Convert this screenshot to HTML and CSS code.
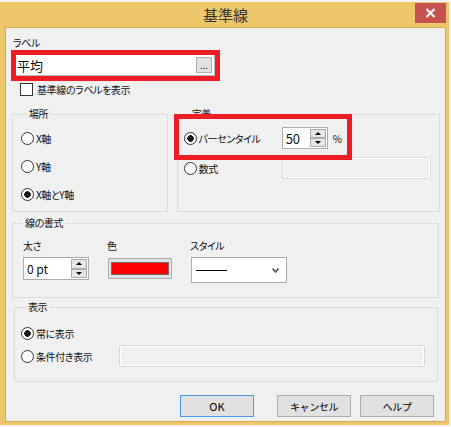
FILE: index.html
```html
<!DOCTYPE html>
<html lang="ja">

<head>
    <meta charset="utf-8">
    <meta name="viewport" content="width=device-width, initial-scale=1.0">
    <title>基準線</title>
    <link rel="stylesheet" href="styles.css">
</head>

<body>
    <div class="window">
        <div class="titlebar">
            <h1 class="title">基準線</h1>
            <button class="close" aria-label="閉じる">
                <svg width="11" height="10" viewBox="0 0 11 10">
                    <path d="M1.5 1 L9.5 9 M9.5 1 L1.5 9" stroke="#fff" stroke-width="2" fill="none" />
                </svg>
            </button>
        </div>

        <div class="client">
            <p class="caption">ラベル</p>
            <div class="mark">
                <div class="textbox">
                    <span>平均</span>
                    <button class="dots">...</button>
                </div>
            </div>
            <label class="check"><span class="box"></span>基準線のラベルを表示</label>

            <div class="groups">
                <fieldset class="group place">
                    <legend>場所</legend>
                    <label class="opt"><span class="radio"></span>X軸</label>
                    <label class="opt"><span class="radio"></span>Y軸</label>
                    <label class="opt"><span class="radio on"></span>X軸とY軸</label>
                </fieldset>

                <fieldset class="group define">
                    <legend>定義</legend>
                    <div class="row">
                        <label class="opt wide"><span class="radio on"></span>パーセンタイル</label>
                        <div class="spin num">
                            <span class="val">50</span>
                            <span class="btns">
                                <span class="arrow"><span class="up"></span></span>
                                <span class="arrow"><span class="down"></span></span>
                            </span>
                        </div>
                        <span class="unit">%</span>
                    </div>
                    <div class="row">
                        <label class="opt wide"><span class="radio"></span>数式</label>
                        <div class="disabled formula"></div>
                    </div>
                </fieldset>
            </div>

            <fieldset class="group format">
                <legend>線の書式</legend>
                <div class="fields">
                    <div class="col weight">
                        <span class="field_label">太さ</span>
                        <div class="spin pt">
                            <span class="val">0 pt</span>
                            <span class="btns">
                                <span class="arrow"><span class="up"></span></span>
                                <span class="arrow"><span class="down"></span></span>
                            </span>
                        </div>
                    </div>
                    <div class="col colour">
                        <span class="field_label">色</span>
                        <button class="swatch"><span></span></button>
                    </div>
                    <div class="col style">
                        <span class="field_label">スタイル</span>
                        <div class="select">
                            <span class="line"></span>
                            <svg width="7" height="5" viewBox="0 0 7 5">
                                <path d="M0.5 0.5 L3.5 4 L6.5 0.5" stroke="#555" stroke-width="1.6" fill="none" />
                            </svg>
                        </div>
                    </div>
                </div>
            </fieldset>

            <fieldset class="group show">
                <legend>表示</legend>
                <div class="row">
                    <label class="opt wide"><span class="radio on"></span>常に表示</label>
                </div>
                <div class="row">
                    <label class="opt wide"><span class="radio"></span>条件付き表示</label>
                    <div class="disabled condition"></div>
                </div>
            </fieldset>

            <div class="actions">
                <button class="btn default">OK</button>
                <button class="btn cancel">キャンセル</button>
                <button class="btn help">ヘルプ</button>
            </div>

            <div class="mark_pct"></div>
        </div>
    </div>
</body>

</html>
```

FILE: styles.css
```css
* {
    box-sizing: border-box;
    margin: 0;
}

body {
    margin: 0;
    background: #f3f3f3;
    font-family: "Noto Sans CJK JP", "Noto Sans", sans-serif;
    font-size: 10px;
    letter-spacing: -0.4px;
    font-feature-settings: "palt";
    color: #111;
}

button {
    font-family: inherit;
    font-size: 10px;
    letter-spacing: inherit;
    padding: 0;
    cursor: pointer;
}

.window {
    width: 449px;
    margin-top: 2px;
    background: #efc76b;
    padding: 0 3px 3px 5px;
}

.titlebar {
    height: 25px;
    display: grid;
    grid-template-columns: 1fr auto 1fr;
    align-items: start;
}

.title {
    grid-column: 2;
    font-size: 15px;
    font-weight: normal;
    letter-spacing: 0;
    color: #333;
    line-height: 25px;
}

.close {
    grid-column: 3;
    justify-self: end;
    width: 31px;
    height: 20px;
    margin-top: 1px;
    border: none;
    background: #c75050;
    display: flex;
    align-items: center;
    justify-content: center;
}

.client {
    position: relative;
    height: 395px;
    border: 1px solid #d2a955;
    background: #f0f0f0;
    padding: 8px 5px 5px 5px;
}

.caption {
    margin-left: 2px;
    line-height: 14px;
}

.mark {
    width: 209px;
    height: 31px;
    border: 5px solid #ee1c25;
}

.textbox {
    height: 21px;
    background: #fff;
    border-right: 1px solid #bcbcbc;
    border-bottom: 1px solid #bcbcbc;
    display: flex;
    align-items: center;
    padding-left: 1px;
    font-size: 13px;
    letter-spacing: 0;
}

.dots {
    margin-left: auto;
    margin-right: 2px;
    width: 16px;
    height: 16px;
    border: 1px solid #adadad;
    background: #e1e1e1;
    font-size: 9px;
    line-height: 16px;
    letter-spacing: 0;
    color: #222;
}

.check {
    display: flex;
    align-items: center;
    gap: 4px;
    height: 13px;
    margin: 2px 0 0 9px;
    line-height: 13px;
}

.box {
    width: 13px;
    height: 13px;
    border: 1px solid #333;
    background: #fff;
    flex: none;
}

.group {
    border: 1px solid #dcdcdc;
    padding: 0;
    min-width: 0;
}

.group legend {
    line-height: 14px;
    padding: 0 2px;
    margin-left: 6px;
}

.groups {
    display: flex;
    gap: 9px;
    margin: 11px 0 0 1px;
}

.place {
    width: 156px;
    padding: 6px 0 6px 8px;
    display: flex;
    flex-direction: column;
    gap: 6px;
}

.define {
    width: 264px;
    padding: 6px 0 0 6px;
}

.row {
    display: flex;
    align-items: center;
    height: 22px;
}

.define .row+.row {
    margin-top: 8px;
}

.opt {
    display: flex;
    align-items: center;
    gap: 2px;
    height: 22px;
}

.wide {
    width: 98px;
    flex: none;
}

.radio {
    width: 13px;
    height: 13px;
    border-radius: 50%;
    border: 1px solid #333;
    background: #fff;
    flex: none;
}

.radio.on {
    background: radial-gradient(circle, #1a1a1a 0 3px, #fff 3.6px);
}

.spin {
    display: flex;
    border: 1px solid #acacac;
    background: #fff;
    letter-spacing: 0;
}

.spin .val {
    flex: 1;
    padding-left: 3px;
    display: flex;
    align-items: center;
}

.spin .btns {
    width: 17px;
    display: flex;
    flex-direction: column;
    padding: 1px 1px 1px 0;
}

.arrow {
    flex: 1;
    border: 1px solid #acacac;
    background: #e6e6e6;
    display: flex;
    align-items: center;
    justify-content: center;
}

.up {
    border-left: 3px solid transparent;
    border-right: 3px solid transparent;
    border-bottom: 3px solid #000;
}

.down {
    border-left: 3px solid transparent;
    border-right: 3px solid transparent;
    border-top: 3px solid #000;
}

.num {
    width: 46px;
    height: 22px;
    font-size: 13px;
}

.unit {
    margin-left: 5px;
    font-size: 10px;
}

.disabled {
    height: 22px;
    border: 1px solid #d9d9d9;
    box-shadow: inset 0 0 0 1px #fff;
    background: #f0f0f0;
}

.formula {
    width: 149px;
}

.condition {
    width: 306px;
}

.format {
    width: 427px;
    margin: 4px 0 0 1px;
    padding: 9px 0 14px 10px;
}

.format legend {
    margin-left: 0;
}

.fields {
    display: flex;
}

.col {
    display: flex;
    flex-direction: column;
    gap: 4px;
}

.field_label {
    line-height: 14px;
}

.weight {
    width: 66px;
    margin-right: 18px;
}

.pt {
    height: 23px;
    font-size: 12px;
}

.colour {
    width: 66px;
    margin-right: 17px;
}

.swatch {
    width: 64px;
    height: 21px;
    margin: 1px 0 0 1px;
    border: 1px solid #adadad;
    background: #e1e1e1;
    padding: 3px 2px;
    display: flex;
}

.swatch span {
    flex: 1;
    background: #ff0000;
    border: 1px solid #6e6e6e;
}

.select {
    width: 96px;
    height: 26px;
    margin-left: 1px;
    border: 1px solid #acacac;
    background: #fff;
    display: flex;
    align-items: center;
    justify-content: space-between;
    padding: 0 7px 0 4px;
}

.line {
    width: 31px;
    border-top: 1px solid #000;
}

.show {
    width: 424px;
    margin: 2px 0 0 3px;
    padding: 8px 0 14px 6px;
}

.show legend {
    margin-left: 5px;
}

.show .row+.row {
    margin-top: 1px;
}

.actions {
    display: flex;
    margin-top: 13px;
    padding-left: 169px;
}

.btn {
    width: 74px;
    height: 22px;
    border: 1px solid #adadad;
    background: #e1e1e1;
    color: #000;
}

.default {
    border-color: #4a9be6;
    font-size: 11px;
    letter-spacing: 0;
}

.cancel {
    margin-left: 23px;
}

.help {
    margin-left: 9px;
}

.mark_pct {
    position: absolute;
    left: 168px;
    top: 86px;
    width: 178px;
    height: 46px;
    border: 5px solid #ee1c25;
}
```
